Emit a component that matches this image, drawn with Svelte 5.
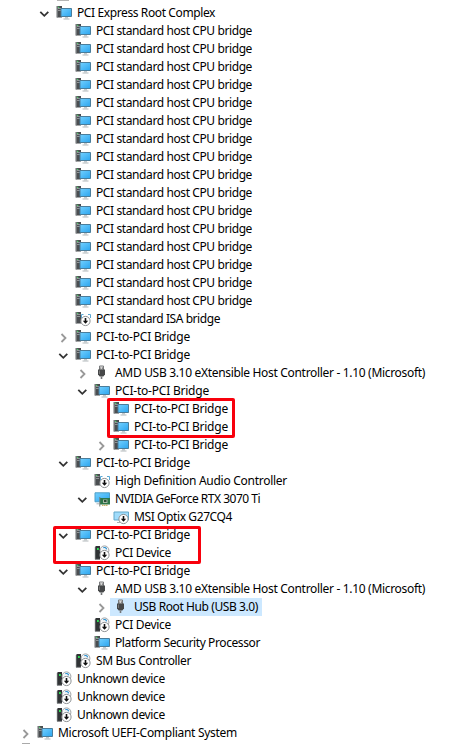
<script>
  import { onMount } from 'svelte';

  const host = Array.from({ length: 16 }, () => [2, '', 'pc', 'PCI standard host CPU bridge', 156]);
  // level, expander, icon, label, label width
  const rows = [
    [1, 'open', 'pc', 'PCI Express Root Complex', 138],
    ...host,
    [2, '', 'pcdown', 'PCI standard ISA bridge', 124],
    [2, 'closed', 'pc', 'PCI-to-PCI Bridge', 94],
    [2, 'open', 'pc', 'PCI-to-PCI Bridge', 94],
    [3, 'closed', 'usb', 'AMD USB 3.10 eXtensible Host Controller - 1.10 (Microsoft)', 310],
    [3, 'open', 'pc', 'PCI-to-PCI Bridge', 94],
    [4, '', 'pc', 'PCI-to-PCI Bridge', 94],
    [4, '', 'pc', 'PCI-to-PCI Bridge', 94],
    [4, 'closed', 'pc', 'PCI-to-PCI Bridge', 94],
    [2, 'open', 'pc', 'PCI-to-PCI Bridge', 94],
    [3, '', 'pcdown', 'High Definition Audio Controller', 172],
    [3, 'open', 'gpu', 'NVIDIA GeForce RTX 3070 Ti', 145],
    [4, '', 'monitor', 'MSI Optix G27CQ4', 98],
    [2, 'open', 'pc', 'PCI-to-PCI Bridge', 94],
    [3, '', 'unknown', 'PCI Device', 56],
    [2, 'open', 'pc', 'PCI-to-PCI Bridge', 94],
    [3, 'open', 'usb', 'AMD USB 3.10 eXtensible Host Controller - 1.10 (Microsoft)', 310],
    [4, 'closed', 'usb', 'USB Root Hub (USB 3.0)', 124, true],
    [3, '', 'unknown', 'PCI Device', 56],
    [3, '', 'pc', 'Platform Security Processor', 145],
    [2, '', 'unknown', 'SM Bus Controller', 95],
    [1, '', 'unknown', 'Unknown device', 88],
    [1, '', 'unknown', 'Unknown device', 88],
    [1, '', 'unknown', 'Unknown device', 88],
    [0, 'closed', 'pc', 'Microsoft UEFI-Compliant System', 179]
  ];

  let tree;
  onMount(() => {
    tree.querySelectorAll('.label').forEach((el, i) => {
      const gap = (rows[i][4] - el.getBoundingClientRect().width) / rows[i][3].length;
      el.style.letterSpacing = `${gap}px`;
    });
  });
</script>

{#snippet tower()}
  <path d="M.7 1H6v11.5H.7z" fill="#4b4e51" />
  <path d="M.7 1h1v11.5h-1z" fill="#85888a" />
  <path d="M2 3.5h3.5M2 5.5h3" stroke="#a3a6a8" stroke-width=".8" />
  <path d="M2 1.8h1.3V3H2z" fill="#55cb70" />
{/snippet}

{#snippet down()}
  <circle cx="10.5" cy="10" r="4.6" fill="#fff" stroke="#8c9093" />
  <path d="M10.5 7v4.5" fill="none" stroke="#111" stroke-width="1.6" />
  <path d="M7.8 9.8h5.4l-2.7 3z" fill="#111" />
{/snippet}

{#snippet icon(kind)}
  <svg class="icon" viewBox="0 0 16 16">
    <defs>
      <linearGradient id="screen" x1="0" y1="0" x2="1" y2="1">
        <stop offset="0" stop-color="#73d0ff" /><stop offset="1" stop-color="#2ba5ef" />
      </linearGradient>
    </defs>
    {#if kind === 'pc'}
      {@render tower()}
      <path d="M5 3.5h10.5v8H5z" fill="url(#screen)" stroke="#4a7d9b" />
      <path d="M9 12h3v1.5H9z" fill="#c4cacd" /><path d="M7.5 14h6" stroke="#b2b8bb" />
    {:else if kind === 'pcdown'}
      {@render tower()}
      <path d="M6.5 7V3.5h2M13 3.5h2.5V7" fill="none" stroke="#5aa8d4" />
      {@render down()}
    {:else if kind === 'usb'}
      <path d="M5.5 1h4v4h-4z" fill="#e8e8e8" stroke="#77797b" />
      <path d="M6.4 2.5h.8v1.2h-.8zm1.6 0h.8v1.2H8z" fill="#444" />
      <path d="M4 4.5h7v5l-1.7 2H5.7L4 9.5z" fill="#464849" />
      <path d="M5 5.5h1v3.5H5z" fill="#777" /><path d="M6.7 11.5h1.6V14H6.7z" fill="#747678" />
    {:else if kind === 'gpu'}
      <path d="M1 1.8h14.5v9H1z" fill="url(#screen)" stroke="#4e9ec6" />
      <path d="M2.5 12.8h3" stroke="#aab0b4" />
      <path d="M6 7h10v6.5H6z" fill="#2c7548" /><path d="M5.8 6v9.5" stroke="#747d77" />
      <path d="M9 8.5h4.5v3.5H9z" fill="#a4b7a5" /><path d="M10 9h2.5v2H10z" fill="#294d35" />
      <path d="M8 14.3h6" stroke="#b99f45" stroke-dasharray="1.5 .5" />
    {:else if kind === 'monitor'}
      <path d="M1 3h14.5v8H1z" fill="#a1dcfb" stroke="#62a7c9" />
      <path d="M4 13.5h3" stroke="#aab0b4" />
      {@render down()}
    {:else}
      <path d="M1 2l1-1h4v13.5H1z" fill="#303335" />
      <path d="M1.2 2v12.3H6" fill="none" stroke="#888c8e" stroke-width=".7" />
      <path d="M3 3h1.8v2H3z" fill="#2fdf55" />
      <circle cx="10.5" cy="5.3" r="4.4" fill="#f4f5f6" stroke="#a0a4a7" />
      <path d="M9.3 2.8c2-.8 3.1.3 3.2 1.6" fill="none" stroke="#278dce" stroke-width="1.2" />
      {@render down()}
    {/if}
  </svg>
{/snippet}

<main>
  <div class="tree" bind:this={tree}>
    {#each rows as [level, expander, kind, label, width, selected]}
      <div class="row" style:padding-left="{19 + level * 19}px">
        <svg class="chevron" viewBox="0 0 12 12">
          {#if expander === 'open'}
            <path d="M2.3 3.8l4 4 4-4" stroke="#333" />
          {:else if expander === 'closed'}
            <path d="M4.5 2l4 4-4 4" stroke="#999" />
          {/if}
        </svg>
        <div class="item" class:selected>
          {@render icon(kind)}
          <span class="label">{label}</span>
        </div>
      </div>
    {/each}
  </div>
  <div class="mark bridges"></div>
  <div class="mark device"></div>
  <div class="above"></div>
  <div class="below"></div>
</main>

<style>
  :global(body) { margin: 0; background: #fff; }
  main { position: relative; box-sizing: border-box; width: 449px; height: 744px; padding-top: 4px; overflow: hidden; background: #fff; color: #000; font: 12px/18px "Noto Sans", "Open Sans", sans-serif; }
  .row { display: flex; height: 18px; box-sizing: border-box; align-items: center; }
  .chevron { width: 12px; height: 12px; flex: none; margin-top: 2px; }
  .chevron path { fill: none; stroke-width: 1.8; }
  .item { display: flex; height: 18px; align-items: center; padding: 0 4px 0 6px; }
  .selected { background: linear-gradient(#cce8ff, #cce8ff) 3px 0 / calc(100% - 3px) 100% no-repeat; }
  .icon { width: 16px; height: 16px; flex: none; margin-right: 5px; }
  .label { white-space: pre; }
  .mark { position: absolute; box-sizing: border-box; border: 3px solid #f8000c; border-radius: 2px; }
  .bridges { left: 107px; top: 398px; width: 128px; height: 40px; }
  .device { left: 53px; top: 526px; width: 148px; height: 38px; }
  .above { position: absolute; left: 57px; top: 0; width: 12px; height: 1px; background: #b5b5b5; }
  .below { position: absolute; left: 22px; top: 743px; width: 8px; height: 1px; background: #aaa; }
</style>
